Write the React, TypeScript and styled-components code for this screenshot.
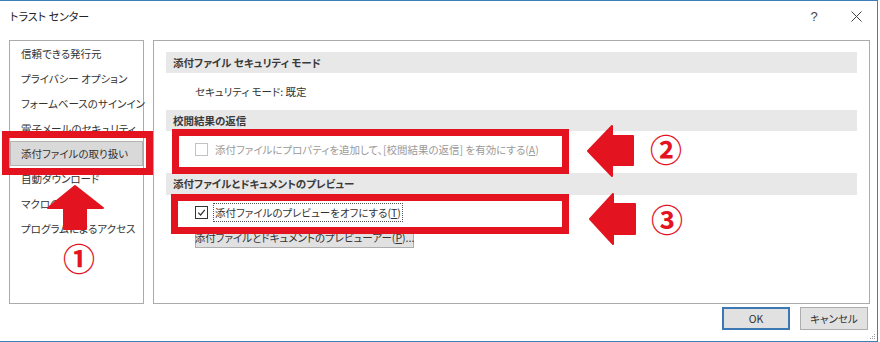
import React from "react";
import styled, { createGlobalStyle } from "styled-components";

const GlobalStyle = createGlobalStyle`
  html, body {
    margin: 0;
    padding: 0;
    background: #fff;
  }
  body {
    font-family: "Noto Sans CJK JP", "Noto Sans", sans-serif;
    font-feature-settings: "palt" 1;
    color: #333;
  }
`;

const RED = "#e3141f";

const Window = styled.div`
  position: relative;
  width: 878px;
  height: 342px;
  box-sizing: border-box;
  border-top: 1px solid #3f7fb8;
  border-right: 1px solid #3f7fb8;
  border-bottom: 1px solid #3f7fb8;
  background: #fff;
  display: flex;
  flex-direction: column;
  font-size: 10.5px;
`;

const TitleBar = styled.div`
  height: 30px;
  display: flex;
  align-items: center;
  padding-left: 10px;
`;

const Title = styled.div`
  flex: 1;
  font-size: 11px;
  color: #222;
`;

const TitleButton = styled.div`
  width: 42px;
  height: 30px;
  display: flex;
  align-items: center;
  justify-content: center;
  color: #444;
  font-family: "Liberation Sans", sans-serif;
  font-size: 13px;
`;

const Body = styled.div`
  display: flex;
  gap: 9px;
  padding: 9px 0 0 9px;
  height: 264px;
`;

const Sidebar = styled.ul`
  list-style: none;
  margin: 0;
  padding: 0;
  width: 135px;
  box-sizing: border-box;
  border: 1px solid #ababab;
  display: flex;
  flex-direction: column;
`;

const SideItem = styled.li<{ $selected?: boolean }>`
  height: 25px;
  line-height: 25px;
  padding-left: 11px;
  white-space: nowrap;
  color: #333;
  box-sizing: border-box;
  ${(p) =>
    p.$selected &&
    `
    background: #d9d9d9;
    border: 1px solid #b4b4b4;
    padding-left: 10px;
    line-height: 23px;
  `}
`;

const Panel = styled.div`
  width: 717px;
  box-sizing: border-box;
  border: 1px solid #ababab;
  padding: 11px 12px 0 12px;
  display: flex;
  flex-direction: column;
`;

const SectionHeader = styled.div<{ $h?: number }>`
  height: ${(p) => p.$h ?? 21}px;
  line-height: ${(p) => p.$h ?? 21}px;
  background: #e8e8e8;
  padding-left: 7px;
  font-weight: 700;
  color: #3a3a3a;
`;

const Block = styled.div<{ $h: number; $pt?: number }>`
  height: ${(p) => p.$h}px;
  box-sizing: border-box;
  padding: ${(p) => p.$pt ?? 0}px 0 0 29px;
  display: flex;
  flex-direction: column;
  align-items: flex-start;
  justify-content: ${(p) => (p.$pt === undefined ? "center" : "flex-start")};
`;

const Row = styled.div`
  display: flex;
  align-items: center;
  height: 19px;
  gap: 5px;
`;

const Box = styled.span<{ $disabled?: boolean }>`
  width: 11px;
  height: 11px;
  border: 1px solid ${(p) => (p.$disabled ? "#c3c3c3" : "#333")};
  background: #fff;
  display: flex;
  align-items: center;
  justify-content: center;
  flex: none;
`;

const Label = styled.span<{ $disabled?: boolean; $focus?: boolean }>`
  color: ${(p) => (p.$disabled ? "#9a9a9a" : "#333")};
  white-space: nowrap;
  padding: 1px 1px;
  border: 1px ${(p) => (p.$focus ? "dotted #555" : "solid transparent")};
`;

const PushButton = styled.button<{ $default?: boolean }>`
  font-family: inherit;
  font-feature-settings: "palt" 1;
  font-size: 10.5px;
  color: #333;
  background: #e1e1e1;
  border: ${(p) => (p.$default ? "2px solid #3c78b4" : "1px solid #adadad")};
  padding: 0;
  height: 23px;
  width: 68px;
  box-sizing: border-box;
  white-space: nowrap;
`;

const WideButton = styled(PushButton)`
  width: 219px;
  height: 21px;
  margin-top: 5px;
  overflow: visible;
  display: flex;
  align-items: center;
  justify-content: center;
`;

const Footer = styled.div`
  display: flex;
  justify-content: flex-end;
  gap: 10px;
  padding: 3px 9px 0 0;
`;

const Grip = styled.svg`
  position: absolute;
  right: 1px;
  bottom: 1px;
`;

/* annotations drawn over the dialog */
const Highlight = styled.div<{ $x: number; $y: number; $w: number; $h: number }>`
  position: absolute;
  left: ${(p) => p.$x}px;
  top: ${(p) => p.$y}px;
  width: ${(p) => p.$w}px;
  height: ${(p) => p.$h}px;
  box-sizing: border-box;
  border: 7px solid ${RED};
`;

const Arrows = styled.svg`
  position: absolute;
  left: 0;
  top: 0;
  overflow: visible;
  pointer-events: none;
`;

const Circled = styled.div<{ $x: number; $y: number }>`
  position: absolute;
  left: ${(p) => p.$x - 15}px;
  top: ${(p) => p.$y - 15}px;
  width: 30px;
  height: 30px;
  line-height: 30px;
  text-align: center;
  color: ${RED};
  font-size: 32px;
  font-weight: 700;
  font-family: "Noto Sans CJK JP", sans-serif;
`;

const sideItems = [
  "信頼できる発行元",
  "プライバシー オプション",
  "フォームベースのサインイン",
  "電子メールのセキュリティ",
  "添付ファイルの取り扱い",
  "自動ダウンロード",
  "マクロの設定",
  "プログラムによるアクセス",
];

const Check = () => (
  <svg width="9" height="9" viewBox="0 0 9 9">
    <path d="M1.2 4.6 L3.6 7 L7.8 1.8" fill="none" stroke="#333" strokeWidth="1.2" />
  </svg>
);

const App: React.FC = () => {
  return (
    <>
      <GlobalStyle />
      <Window>
        <TitleBar>
          <Title>トラスト センター</Title>
          <TitleButton>?</TitleButton>
          <TitleButton>
            <svg width="11" height="11" viewBox="0 0 11 11">
              <path d="M0.5 0.5 L10.5 10.5 M10.5 0.5 L0.5 10.5" stroke="#444" strokeWidth="1" />
            </svg>
          </TitleButton>
        </TitleBar>

        <Body>
          <Sidebar>
            {sideItems.map((item, i) => (
              <SideItem key={item} $selected={i === 4}>
                {item}
              </SideItem>
            ))}
          </Sidebar>

          <Panel>
            <SectionHeader>添付ファイル セキュリティ モード</SectionHeader>
            <Block $h={37}>セキュリティ モード: 既定</Block>

            <SectionHeader>校閲結果の返信</SectionHeader>
            <Block $h={42} $pt={9}>
              <Row>
                <Box $disabled />
                <Label $disabled>
                  添付ファイルにプロパティを追加して、[校閲結果の返信] を有効にする(<u>A</u>)
                </Label>
              </Row>
            </Block>

            <SectionHeader $h={22}>添付ファイルとドキュメントのプレビュー</SectionHeader>
            <Block $h={80} $pt={8}>
              <Row>
                <Box>
                  <Check />
                </Box>
                <Label $focus>
                  添付ファイルのプレビューをオフにする(<u>T</u>)
                </Label>
              </Row>
              <WideButton>
                添付ファイルとドキュメントのプレビューアー(<u>P</u>)...
              </WideButton>
            </Block>
          </Panel>
        </Body>

        <Footer>
          <PushButton $default>OK</PushButton>
          <PushButton>キャンセル</PushButton>
        </Footer>

        <Grip width="7" height="7" viewBox="0 0 7 7">
          <g fill="#9a9a9a">
            <rect x="5" y="1" width="1" height="1" />
            <rect x="3" y="3" width="1" height="1" />
            <rect x="5" y="3" width="1" height="1" />
            <rect x="1" y="5" width="1" height="1" />
            <rect x="3" y="5" width="1" height="1" />
            <rect x="5" y="5" width="1" height="1" />
          </g>
        </Grip>

        <Highlight $x={2} $y={130} $w={151} $h={44} />
        <Highlight $x={172} $y={128} $w={397} $h={45} />
        <Highlight $x={171} $y={193} $w={398} $h={40} />

        <Arrows width="1" height="1">
          <path
            d="M75 185 L103 207 L86 207 L86 228 L64 228 L64 207 L48 207 Z"
            fill={RED}
            stroke={RED}
            strokeWidth="2"
            strokeLinejoin="round"
          />
          <path
            d="M588 150 L612 125 L612 135 L633 135 L633 164 L612 164 L612 175 Z"
            fill={RED}
            stroke={RED}
            strokeWidth="2"
            strokeLinejoin="round"
          />
          <path
            d="M590 218 L613 193 L613 203 L635 203 L635 233 L613 233 L613 243 Z"
            fill={RED}
            stroke={RED}
            strokeWidth="2"
            strokeLinejoin="round"
          />
        </Arrows>

        <Circled $x={78} $y={256}>①</Circled>
        <Circled $x={665} $y={147}>②</Circled>
        <Circled $x={666} $y={217}>③</Circled>
      </Window>
    </>
  );
};

export default App;
